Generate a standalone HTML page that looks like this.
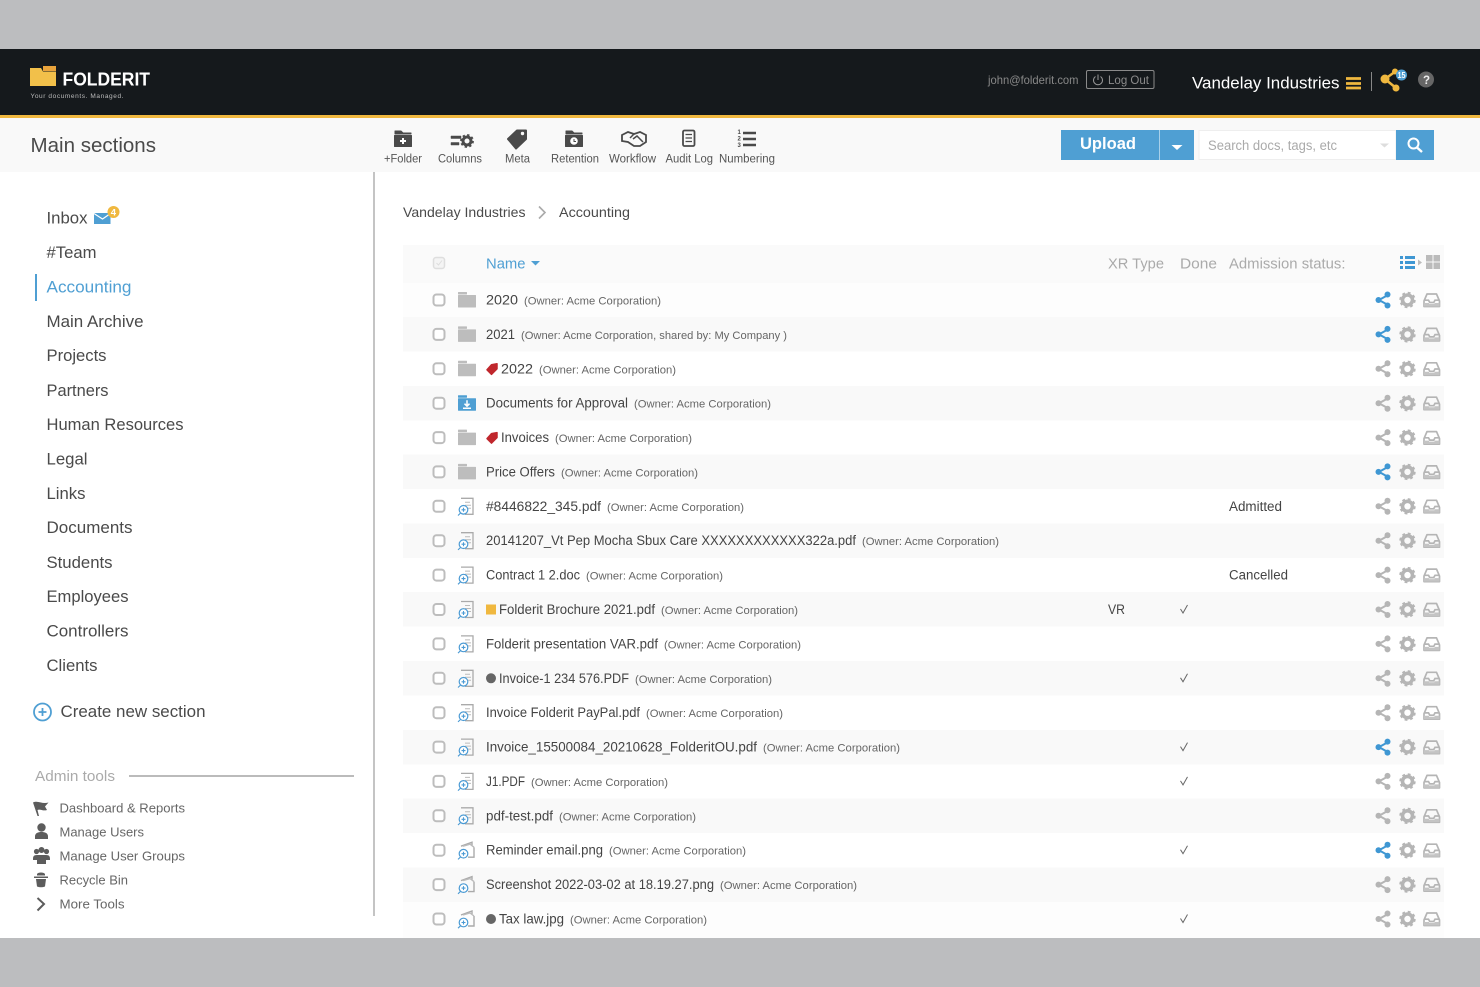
<!DOCTYPE html>
<html lang="en"><head><meta charset="utf-8"><title>Folderit</title>
<style>
html,body{margin:0;padding:0;background:#fff;width:1480px;height:987px;overflow:hidden}
svg{display:block}
text{font-family:"Liberation Sans",sans-serif;fill:#444;white-space:pre}
.n{font-size:13.5px;fill:#444}
.o{font-size:11.3px;fill:#666}
.s{font-size:17px;fill:#4a4a4a}
.t{font-size:11.5px;fill:#555}
.a{font-size:13px;fill:#666}
.h{font-size:15px;fill:#aaa}
</style></head><body>
<svg xmlns="http://www.w3.org/2000/svg" width="1480" height="987" viewBox="0 0 1480 987">
<defs>
<g id="gearI"><circle cx="1407.5" cy="0" r="5" fill="none" stroke="#b5b5b5" stroke-width="3.6"/><circle cx="1407.5" cy="0" r="7.2" fill="none" stroke="#b5b5b5" stroke-width="2" stroke-dasharray="2.83 2.83"/></g>
<g id="trayI"><path d="M1427-6H1436.500L1439.500 1V6.500H1424V1Z" fill="none" stroke="#b5b5b5" stroke-width="1.700" stroke-linejoin="round"/><path d="M1424 0.200H1428.500L1429.800 2.500H1433.700L1435 0.200H1439.500" fill="none" stroke="#b5b5b5" stroke-width="1.700"/><path d="M1424 3H1429V4H1434.500V3H1439.500V6.500H1424Z" fill="#c4c4c4"/></g>
<g id="shareG"><path d="M1388 -5L1379 0L1388 5" fill="none" stroke="#b5b5b5" stroke-width="2"/><circle cx="1387.500" cy="-5.500" r="3" fill="#b5b5b5"/><circle cx="1387.500" cy="5.500" r="3" fill="#b5b5b5"/><circle cx="1378.500" cy="0" r="3" fill="#b5b5b5"/></g>
<g id="shareB"><path d="M1388 -5L1379 0L1388 5" fill="none" stroke="#3f97d3" stroke-width="2"/><circle cx="1387.500" cy="-5.500" r="3" fill="#3f97d3"/><circle cx="1387.500" cy="5.500" r="3" fill="#3f97d3"/><circle cx="1378.500" cy="0" r="3" fill="#3f97d3"/></g>
<rect id="cb" x="433.500" y="-5.500" width="11" height="11" rx="3" fill="#fff" stroke="#bdbdbd" stroke-width="2"/>
<path id="fold" d="M458.500-7.500H466.500V-6H458.500ZM458.500-4.500H475.500V7H458.500Z" fill="#bdbdbd" stroke="#bdbdbd" stroke-width="1" stroke-linejoin="round"/>
<g id="file"><path d="M461 -8H473V8H465" fill="none" stroke="#aaa" stroke-width="1.300"/><path d="M465-4H470M465-1H471M467 2H471" stroke="#bbb" stroke-width="1"/><circle cx="463.500" cy="3.500" r="4.300" fill="#fff" stroke="#4a9ad4" stroke-width="1.200"/><path d="M461.500 3.500H465.500M463.500 1.500V5.500M460.500 6.800L458 9.200" stroke="#4a9ad4" stroke-width="1.100"/></g>
<g id="img"><path d="M461-4L472-8V-5M474-3V7H468" fill="none" stroke="#aaa" stroke-width="1.400"/><path d="M463-4L470-6L474-3" fill="none" stroke="#bbb" stroke-width="1.400"/><circle cx="463.500" cy="3.500" r="4.300" fill="#fff" stroke="#4a9ad4" stroke-width="1.200"/><path d="M461.500 3.500H465.500M463.500 1.500V5.500M460.500 6.800L458 9.200" stroke="#4a9ad4" stroke-width="1.100"/></g>
<path id="tag" d="M487 1L491.500-4L497-5V0L491.500 5.500Z" fill="#c0272d" stroke="#c0272d" stroke-width="1.500" stroke-linejoin="round"/>
</defs>

<rect width="1480" height="987" fill="#fff"/>
<rect width="1480" height="49" fill="#bcbdbf"/>
<rect y="938" width="1480" height="49" fill="#bcbdbf"/>
<rect y="49" width="1480" height="67" fill="#15191c"/>
<rect y="115" width="1480" height="3" fill="#f0b83f"/>
<rect y="118" width="1480" height="54" fill="#f9f9f9"/>

<!-- logo -->
<path d="M30 68H41L43 71.500H56V86H30Z" fill="#f2c04a"/><rect x="43" y="66" width="13" height="5" fill="#e8a33c"/>
<text x="62.500" y="85.500" style="font-size:18.500px;font-weight:700;fill:#fff" textLength="87.500" lengthAdjust="spacingAndGlyphs">FOLDERIT</text>
<text x="30.500" y="98" style="font-size:6.500px;fill:#bbb" textLength="93" lengthAdjust="spacing">Your documents. Managed.</text>
<text x="30.500" y="152" style="font-size:20.500px;fill:#4a4a4a" textLength="125.500" lengthAdjust="spacingAndGlyphs">Main sections</text>

<!-- top right -->
<text x="988" y="84" style="font-size:11.800px;fill:#888" textLength="90.500" lengthAdjust="spacingAndGlyphs">john@folderit.com</text>
<rect x="1086.500" y="70.500" width="67.500" height="18" rx="1.500" fill="none" stroke="#8a8a8a"/>
<path d="M1095.500 76.500A4.500 4.500 0 1 0 1100.500 76.500M1098 74.500V80" fill="none" stroke="#999" stroke-width="1"/>
<text x="1108" y="84" style="font-size:12px;fill:#8c8c8c" textLength="41" lengthAdjust="spacingAndGlyphs">Log Out</text>
<text x="1192" y="88.500" style="font-size:17px;fill:#fff" textLength="147.500" lengthAdjust="spacingAndGlyphs">Vandelay Industries</text>
<path d="M1346 78.500H1361M1346 83.500H1361M1346 88H1361" stroke="#f0b83f" stroke-width="2.800"/>
<rect x="1371" y="72" width="1" height="19" fill="#888"/>
<path d="M1396 71L1385 79L1396 88" fill="none" stroke="#f0b83f" stroke-width="2.500"/>
<circle cx="1385" cy="79" r="4.500" fill="#f0b83f"/><circle cx="1395" cy="71.500" r="3" fill="#f0b83f"/><circle cx="1396" cy="88" r="3.500" fill="#f0b83f"/>
<circle cx="1401.500" cy="75" r="5.500" fill="#4f9fd3"/>
<text x="1397.500" y="78" style="font-size:8px;font-weight:700;fill:#fff" textLength="8" lengthAdjust="spacingAndGlyphs">15</text>
<circle cx="1426" cy="79.500" r="8" fill="#666"/>
<text x="1423" y="84" style="font-size:11.500px;font-weight:700;fill:#eee">?</text>

<!-- toolbar icons -->
<g fill="#4a4a4a" stroke="#4a4a4a" stroke-linejoin="round">
<path d="M395 131H401L403 133H411V134H395ZM394.500 135.500H411.500V146.500H394.500Z"/>
<path d="M451 136H461V138.500H451ZM451 142.500H459V145H451Z" stroke-width="0.500"/>
<path d="M508 139L517 130.500H526V139L516 148.500Z" stroke-width="2"/>
<path d="M566 131H572L574 133H582V134H566ZM565.500 135.500H582.500V146.500H565.500Z"/>
</g>
<path d="M400 141H406M403 138V144" stroke="#fff" stroke-width="2"/>
<circle cx="467" cy="141" r="4" fill="none" stroke="#4a4a4a" stroke-width="3"/><circle cx="467" cy="141" r="6" fill="none" stroke="#4a4a4a" stroke-width="1.800" stroke-dasharray="2.350 2.350"/>
<circle cx="522.500" cy="133.500" r="1.700" fill="#f9f9f9"/>
<circle cx="574" cy="141" r="3.800" fill="#fff"/><path d="M574 139V141.500H576" stroke="#4a4a4a" fill="none"/>
<g fill="none" stroke="#4a4a4a">
<path d="M622 135L628 132L634 134L640 132L646 135V142L640 146H634L628 142L622 141Z" stroke-width="1.800"/><path d="M630 138L634 134M633 139L637 136L643 142" stroke-width="1.500"/>
<rect x="683" y="130.500" width="11.500" height="15.500" rx="1.500" stroke-width="1.800"/><path d="M685.500 134.500H692M685.500 138H692M685.500 141.500H692" stroke-width="1.200"/>
<path d="M743 133H756M743 139H756M743 145H756" stroke-width="2.500"/>
</g>
<text x="737.500" y="134" style="font-size:6px;font-weight:700;fill:#4a4a4a">1</text><text x="737.500" y="140.500" style="font-size:6px;font-weight:700;fill:#4a4a4a">2</text><text x="737.500" y="147" style="font-size:6px;font-weight:700;fill:#4a4a4a">3</text>
<text class="t" x="384" y="162.500" textLength="38" lengthAdjust="spacingAndGlyphs">+Folder</text>
<text class="t" x="438" y="162.500" textLength="44" lengthAdjust="spacingAndGlyphs">Columns</text>
<text class="t" x="505" y="162.500" textLength="25" lengthAdjust="spacingAndGlyphs">Meta</text>
<text class="t" x="551" y="162.500" textLength="48" lengthAdjust="spacingAndGlyphs">Retention</text>
<text class="t" x="609" y="162.500" textLength="47" lengthAdjust="spacingAndGlyphs">Workflow</text>
<text class="t" x="665.500" y="162.500" textLength="47.500" lengthAdjust="spacingAndGlyphs">Audit Log</text>
<text class="t" x="719" y="162.500" textLength="56" lengthAdjust="spacingAndGlyphs">Numbering</text>

<!-- upload + search -->
<rect x="1061" y="130" width="133" height="30" fill="#4f9fd3"/>
<rect x="1159" y="130" width="1" height="30" fill="#a8d0ea"/>
<text x="1080" y="149" style="font-size:16.500px;font-weight:700;fill:#fff" textLength="56" lengthAdjust="spacingAndGlyphs">Upload</text>
<path d="M1171.500 145H1182.500L1177 150Z" fill="#fff"/>
<rect x="1199" y="130.500" width="197" height="29" fill="#fff" stroke="#eee"/>
<text x="1208" y="150" style="font-size:13.500px;fill:#aaa" textLength="129" lengthAdjust="spacingAndGlyphs">Search docs, tags, etc</text>
<path d="M1380 143.500H1389L1384.500 147.500Z" fill="#ddd"/>
<rect x="1396" y="130" width="38" height="30" fill="#4f9fd3"/>
<circle cx="1413.500" cy="143.500" r="5" fill="none" stroke="#fff" stroke-width="2"/><path d="M1417 147.500L1422 152" stroke="#fff" stroke-width="2.400"/>

<!-- sidebar -->
<rect x="373" y="172" width="2" height="744" fill="#c4c4c4"/>
<text class="s" x="46.500" y="223.500" textLength="41" lengthAdjust="spacingAndGlyphs">Inbox</text>
<path d="M94 213H110.500V224H94Z" fill="#4f9fd3"/><path d="M94 213.500L102.500 219L110.500 213.500" fill="none" stroke="#fff" stroke-width="1.200"/>
<circle cx="113.500" cy="212" r="6" fill="#f0b83f"/><text x="110.800" y="215.500" style="font-size:9.500px;font-weight:700;fill:#fff">4</text>
<text class="s" x="46.500" y="258" textLength="50" lengthAdjust="spacingAndGlyphs">#Team</text>
<rect x="35" y="274" width="2" height="27" fill="#4f9fd3"/>
<text class="s" x="46.500" y="292.500" textLength="85" lengthAdjust="spacingAndGlyphs" style="fill:#4f9fd3">Accounting</text>
<text class="s" x="46.500" y="327" textLength="97" lengthAdjust="spacingAndGlyphs">Main Archive</text>
<text class="s" x="46.500" y="361" textLength="60" lengthAdjust="spacingAndGlyphs">Projects</text>
<text class="s" x="46.500" y="396" textLength="62" lengthAdjust="spacingAndGlyphs">Partners</text>
<text class="s" x="46.500" y="430" textLength="137" lengthAdjust="spacingAndGlyphs">Human Resources</text>
<text class="s" x="46.500" y="464.500" textLength="41" lengthAdjust="spacingAndGlyphs">Legal</text>
<text class="s" x="46.500" y="499" textLength="39" lengthAdjust="spacingAndGlyphs">Links</text>
<text class="s" x="46.500" y="533" textLength="86" lengthAdjust="spacingAndGlyphs">Documents</text>
<text class="s" x="46.500" y="568" textLength="66" lengthAdjust="spacingAndGlyphs">Students</text>
<text class="s" x="46.500" y="602" textLength="82" lengthAdjust="spacingAndGlyphs">Employees</text>
<text class="s" x="46.500" y="636.500" textLength="82" lengthAdjust="spacingAndGlyphs">Controllers</text>
<text class="s" x="46.500" y="671" textLength="51" lengthAdjust="spacingAndGlyphs">Clients</text>
<circle cx="42.500" cy="712" r="8.500" fill="none" stroke="#4f9fd3" stroke-width="1.800"/><path d="M38.500 712H46.500M42.500 708V716" stroke="#4f9fd3" stroke-width="1.800"/>
<text class="s" x="60.500" y="717" textLength="145" lengthAdjust="spacingAndGlyphs">Create new section</text>
<text x="35" y="781" style="font-size:14.500px;fill:#aaa" textLength="80" lengthAdjust="spacingAndGlyphs">Admin tools</text>
<rect x="129" y="775" width="225" height="2" fill="#bbb"/>
<path d="M33 802.500C38 800 42 804.500 48.500 802.500L45 806.500L47 810C43 811.500 40 808.500 37.500 810L39 816H37.500Z" fill="#5c5c5c"/>
<circle cx="41.500" cy="827.500" r="4.200" fill="#5c5c5c"/><path d="M35 839V836.500C35 833 38 832 41.500 832S48 833 48 836.500V839Z" fill="#5c5c5c"/>
<g fill="#5c5c5c"><circle cx="36.500" cy="851.500" r="2.600"/><circle cx="41.500" cy="850" r="3"/><circle cx="46.500" cy="851.500" r="2.600"/><path d="M33 859C33 855 35 855 38 855H45C48 855 50 855 50 859V860H46V864H37V860H33Z"/></g>
<path d="M34 876.500H48V878H34ZM36 879H46L45 886.500Q41 888 37 886.500ZM37 874C38 872 44 872 45 874V875.500H37Z" fill="#5c5c5c"/>
<path d="M37.500 898L44 904L37.500 910.500" fill="none" stroke="#5c5c5c" stroke-width="2"/>
<text class="a" x="59.500" y="812.500" textLength="125.500" lengthAdjust="spacingAndGlyphs">Dashboard &amp; Reports</text>
<text class="a" x="59.500" y="836.500" textLength="84.500" lengthAdjust="spacingAndGlyphs">Manage Users</text>
<text class="a" x="59.500" y="860.500" textLength="125.500" lengthAdjust="spacingAndGlyphs">Manage User Groups</text>
<text class="a" x="59.500" y="884.500" textLength="68.500" lengthAdjust="spacingAndGlyphs">Recycle Bin</text>
<text class="a" x="59.500" y="908.500" textLength="65" lengthAdjust="spacingAndGlyphs">More Tools</text>

<!-- breadcrumb -->
<text x="403" y="217" style="font-size:14px;fill:#4a4a4a" textLength="122.500" lengthAdjust="spacingAndGlyphs">Vandelay Industries</text>
<path d="M539 206.500L545 212.500L539 218.500" fill="none" stroke="#aaa" stroke-width="1.600"/>
<text x="559" y="217" style="font-size:14px;fill:#4a4a4a" textLength="71" lengthAdjust="spacingAndGlyphs">Accounting</text>

<!-- table bands -->
<rect x="403" y="245" width="1041" height="38" fill="#fafafa"/>
<rect x="403" y="283" width="1041" height="34" fill="#fdfdfd"/>
<g fill="#f9f9f9">
<rect x="403" y="317" width="1041" height="34.500"/><rect x="403" y="386" width="1041" height="34.500"/><rect x="403" y="454.500" width="1041" height="34.500"/><rect x="403" y="523.500" width="1041" height="34.500"/><rect x="403" y="592" width="1041" height="34.500"/><rect x="403" y="661" width="1041" height="34.500"/><rect x="403" y="730" width="1041" height="34.500"/><rect x="403" y="798.500" width="1041" height="34.500"/><rect x="403" y="867.500" width="1041" height="34.500"/>
</g>
<rect x="403" y="902" width="1041" height="36" fill="#fdfdfd"/>

<!-- table header -->
<rect x="433.500" y="257.500" width="11" height="11" rx="2.500" fill="#f4f4f4" stroke="#dedede" stroke-width="1.500"/><path d="M436.500 263L438.500 265L442 260.500" fill="none" stroke="#ddd"/>
<text x="486" y="268.500" style="font-size:15px;fill:#4f9fd3" textLength="39.500" lengthAdjust="spacingAndGlyphs">Name</text>
<path d="M531 261H540L535.500 265.500Z" fill="#4f9fd3"/>
<text class="h" x="1108" y="268.500" textLength="56" lengthAdjust="spacingAndGlyphs">XR Type</text>
<text class="h" x="1180" y="268.500" textLength="37" lengthAdjust="spacingAndGlyphs">Done</text>
<text class="h" x="1229" y="268.500" textLength="116.500" lengthAdjust="spacingAndGlyphs">Admission status:</text>
<g fill="#3f97d3"><rect x="1400" y="256" width="3" height="3"/><rect x="1405" y="256" width="10" height="3"/><rect x="1400" y="261" width="3" height="3"/><rect x="1405" y="261" width="10" height="3"/><rect x="1400" y="266" width="3" height="3"/><rect x="1405" y="266" width="10" height="3"/></g>
<path d="M1418 259.500L1422 262.500L1418 265.500Z" fill="#bbb"/>
<g fill="#bbb"><rect x="1426" y="255" width="6.500" height="6.500"/><rect x="1433.500" y="255" width="6.500" height="6.500"/><rect x="1426" y="262.500" width="6.500" height="6.500"/><rect x="1433.500" y="262.500" width="6.500" height="6.500"/></g>

<!-- rows -->
<g transform="translate(0,300)"><use href="#cb"/><use href="#fold"/><text class="n" x="486" y="4.500" textLength="32" lengthAdjust="spacingAndGlyphs">2020</text><text class="o" x="524" y="4.500" textLength="137" lengthAdjust="spacingAndGlyphs">(Owner: Acme Corporation)</text><use href="#shareB"/><use href="#gearI"/><use href="#trayI"/></g>
<g transform="translate(0,334.400)"><use href="#cb"/><use href="#fold"/><text class="n" x="486" y="4.500" textLength="29" lengthAdjust="spacingAndGlyphs">2021</text><text class="o" x="521" y="4.500" textLength="266" lengthAdjust="spacingAndGlyphs">(Owner: Acme Corporation, shared by: My Company )</text><use href="#shareB"/><use href="#gearI"/><use href="#trayI"/></g>
<g transform="translate(0,368.800)"><use href="#cb"/><use href="#fold"/><use href="#tag"/><text class="n" x="501" y="4.500" textLength="32" lengthAdjust="spacingAndGlyphs">2022</text><text class="o" x="539" y="4.500" textLength="137" lengthAdjust="spacingAndGlyphs">(Owner: Acme Corporation)</text><use href="#shareG"/><use href="#gearI"/><use href="#trayI"/></g>
<g transform="translate(0,403.200)"><use href="#cb"/><path d="M458.500-7.500H466.500V-6H458.500ZM458.500-4.500H475.500V7H458.500Z" fill="#4f9fd3" stroke="#4f9fd3" stroke-linejoin="round"/><path d="M463 5H471M467-3V2M464.500 0.500L467 3L469.500 0.500" stroke="#fff" stroke-width="1.500" fill="none"/><text class="n" x="486" y="4.500" textLength="142" lengthAdjust="spacingAndGlyphs">Documents for Approval</text><text class="o" x="634" y="4.500" textLength="137" lengthAdjust="spacingAndGlyphs">(Owner: Acme Corporation)</text><use href="#shareG"/><use href="#gearI"/><use href="#trayI"/></g>
<g transform="translate(0,437.600)"><use href="#cb"/><use href="#fold"/><use href="#tag"/><text class="n" x="501" y="4.500" textLength="48" lengthAdjust="spacingAndGlyphs">Invoices</text><text class="o" x="555" y="4.500" textLength="137" lengthAdjust="spacingAndGlyphs">(Owner: Acme Corporation)</text><use href="#shareG"/><use href="#gearI"/><use href="#trayI"/></g>
<g transform="translate(0,471.900)"><use href="#cb"/><use href="#fold"/><text class="n" x="486" y="4.500" textLength="69" lengthAdjust="spacingAndGlyphs">Price Offers</text><text class="o" x="561" y="4.500" textLength="137" lengthAdjust="spacingAndGlyphs">(Owner: Acme Corporation)</text><use href="#shareB"/><use href="#gearI"/><use href="#trayI"/></g>
<g transform="translate(0,506.300)"><use href="#cb"/><use href="#file"/><text class="n" x="486" y="4.500" textLength="115" lengthAdjust="spacingAndGlyphs">#8446822_345.pdf</text><text class="o" x="607" y="4.500" textLength="137" lengthAdjust="spacingAndGlyphs">(Owner: Acme Corporation)</text><text class="n" x="1229" y="4.500" textLength="53" lengthAdjust="spacingAndGlyphs">Admitted</text><use href="#shareG"/><use href="#gearI"/><use href="#trayI"/></g>
<g transform="translate(0,540.700)"><use href="#cb"/><use href="#file"/><text class="n" x="486" y="4.500" textLength="370" lengthAdjust="spacingAndGlyphs">20141207_Vt Pep Mocha Sbux Care XXXXXXXXXXXX322a.pdf</text><text class="o" x="862" y="4.500" textLength="137" lengthAdjust="spacingAndGlyphs">(Owner: Acme Corporation)</text><use href="#shareG"/><use href="#gearI"/><use href="#trayI"/></g>
<g transform="translate(0,575.100)"><use href="#cb"/><use href="#file"/><text class="n" x="486" y="4.500" textLength="94" lengthAdjust="spacingAndGlyphs">Contract 1 2.doc</text><text class="o" x="586" y="4.500" textLength="137" lengthAdjust="spacingAndGlyphs">(Owner: Acme Corporation)</text><text class="n" x="1229" y="4.500" textLength="59" lengthAdjust="spacingAndGlyphs">Cancelled</text><use href="#shareG"/><use href="#gearI"/><use href="#trayI"/></g>
<g transform="translate(0,609.500)"><use href="#cb"/><use href="#file"/><rect x="486" y="-5" width="10" height="10" fill="#f0b83f"/><text class="n" x="499" y="4.500" textLength="156" lengthAdjust="spacingAndGlyphs">Folderit Brochure 2021.pdf</text><text class="o" x="661" y="4.500" textLength="137" lengthAdjust="spacingAndGlyphs">(Owner: Acme Corporation)</text><text class="n" x="1108" y="4.500" textLength="17" lengthAdjust="spacingAndGlyphs">VR</text><path d="M1180.500-0.500L1183 3.500L1187.500-4.500" fill="none" stroke="#666"/><use href="#shareG"/><use href="#gearI"/><use href="#trayI"/></g>
<g transform="translate(0,643.900)"><use href="#cb"/><use href="#file"/><text class="n" x="486" y="4.500" textLength="172" lengthAdjust="spacingAndGlyphs">Folderit presentation VAR.pdf</text><text class="o" x="664" y="4.500" textLength="137" lengthAdjust="spacingAndGlyphs">(Owner: Acme Corporation)</text><use href="#shareG"/><use href="#gearI"/><use href="#trayI"/></g>
<g transform="translate(0,678.300)"><use href="#cb"/><use href="#file"/><circle cx="491" cy="0" r="5" fill="#666"/><text class="n" x="499" y="4.500" textLength="130" lengthAdjust="spacingAndGlyphs">Invoice-1 234 576.PDF</text><text class="o" x="635" y="4.500" textLength="137" lengthAdjust="spacingAndGlyphs">(Owner: Acme Corporation)</text><path d="M1180.500-0.500L1183 3.500L1187.500-4.500" fill="none" stroke="#666"/><use href="#shareG"/><use href="#gearI"/><use href="#trayI"/></g>
<g transform="translate(0,712.700)"><use href="#cb"/><use href="#file"/><text class="n" x="486" y="4.500" textLength="154" lengthAdjust="spacingAndGlyphs">Invoice Folderit PayPal.pdf</text><text class="o" x="646" y="4.500" textLength="137" lengthAdjust="spacingAndGlyphs">(Owner: Acme Corporation)</text><use href="#shareG"/><use href="#gearI"/><use href="#trayI"/></g>
<g transform="translate(0,747.100)"><use href="#cb"/><use href="#file"/><text class="n" x="486" y="4.500" textLength="271" lengthAdjust="spacingAndGlyphs">Invoice_15500084_20210628_FolderitOU.pdf</text><text class="o" x="763" y="4.500" textLength="137" lengthAdjust="spacingAndGlyphs">(Owner: Acme Corporation)</text><path d="M1180.500-0.500L1183 3.500L1187.500-4.500" fill="none" stroke="#666"/><use href="#shareB"/><use href="#gearI"/><use href="#trayI"/></g>
<g transform="translate(0,781.400)"><use href="#cb"/><use href="#file"/><text class="n" x="486" y="4.500" textLength="39" lengthAdjust="spacingAndGlyphs">J1.PDF</text><text class="o" x="531" y="4.500" textLength="137" lengthAdjust="spacingAndGlyphs">(Owner: Acme Corporation)</text><path d="M1180.500-0.500L1183 3.500L1187.500-4.500" fill="none" stroke="#666"/><use href="#shareG"/><use href="#gearI"/><use href="#trayI"/></g>
<g transform="translate(0,815.800)"><use href="#cb"/><use href="#file"/><text class="n" x="486" y="4.500" textLength="67" lengthAdjust="spacingAndGlyphs">pdf-test.pdf</text><text class="o" x="559" y="4.500" textLength="137" lengthAdjust="spacingAndGlyphs">(Owner: Acme Corporation)</text><use href="#shareG"/><use href="#gearI"/><use href="#trayI"/></g>
<g transform="translate(0,850.200)"><use href="#cb"/><use href="#img"/><text class="n" x="486" y="4.500" textLength="117" lengthAdjust="spacingAndGlyphs">Reminder email.png</text><text class="o" x="609" y="4.500" textLength="137" lengthAdjust="spacingAndGlyphs">(Owner: Acme Corporation)</text><path d="M1180.500-0.500L1183 3.500L1187.500-4.500" fill="none" stroke="#666"/><use href="#shareB"/><use href="#gearI"/><use href="#trayI"/></g>
<g transform="translate(0,884.600)"><use href="#cb"/><use href="#img"/><text class="n" x="486" y="4.500" textLength="228" lengthAdjust="spacingAndGlyphs">Screenshot 2022-03-02 at 18.19.27.png</text><text class="o" x="720" y="4.500" textLength="137" lengthAdjust="spacingAndGlyphs">(Owner: Acme Corporation)</text><use href="#shareG"/><use href="#gearI"/><use href="#trayI"/></g>
<g transform="translate(0,919)"><use href="#cb"/><use href="#img"/><circle cx="491" cy="0" r="5" fill="#666"/><text class="n" x="499" y="4.500" textLength="65" lengthAdjust="spacingAndGlyphs">Tax law.jpg</text><text class="o" x="570" y="4.500" textLength="137" lengthAdjust="spacingAndGlyphs">(Owner: Acme Corporation)</text><path d="M1180.500-0.500L1183 3.500L1187.500-4.500" fill="none" stroke="#666"/><use href="#shareG"/><use href="#gearI"/><use href="#trayI"/></g>
</svg>
</body></html>
